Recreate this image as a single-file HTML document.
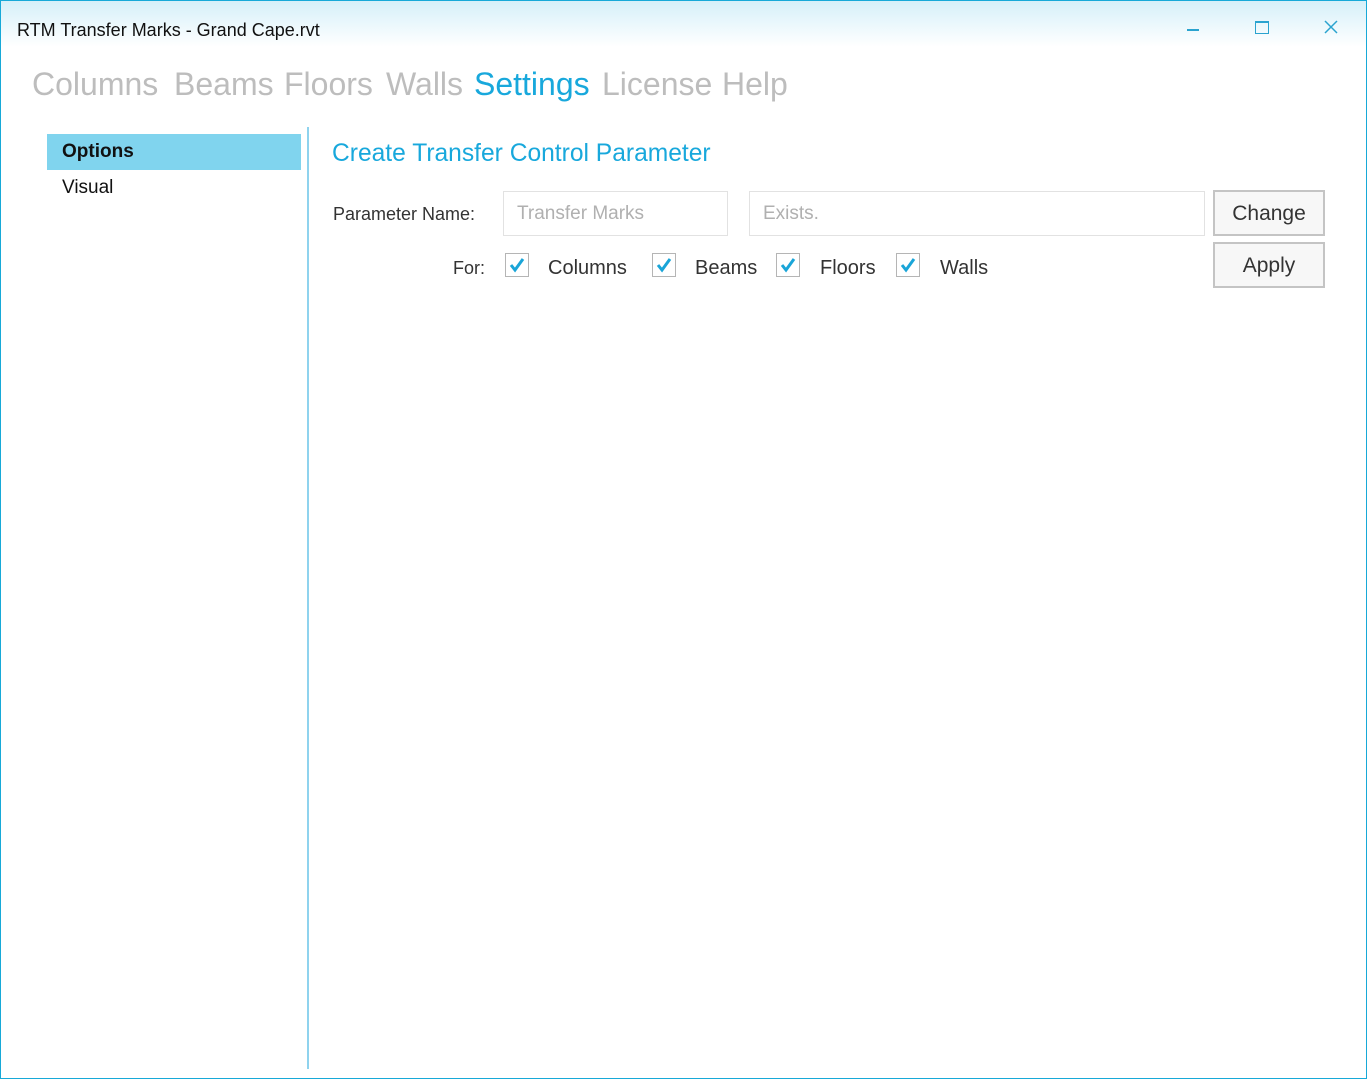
<!DOCTYPE html>
<html><head><style>
body{margin:0;width:1367px;height:1079px;position:relative;overflow:hidden;background:#fff;font-family:"Liberation Sans",sans-serif;}
.a{position:absolute;white-space:nowrap}
.nav{font-size:32px;color:#bdbdbd;top:66px}
.cb{position:absolute;width:24px;height:24px;border:1px solid #b5b5b5;box-sizing:border-box;top:253px;background:#fff}
.cb svg{position:absolute;left:3px;top:3px}
.lbl{font-size:20px;color:#333;top:257px}
.btn{position:absolute;left:1213px;width:112px;height:46px;border:2px solid #c4c4c4;box-sizing:border-box;background:#f7f7f7;font-size:21px;color:#333;text-align:center;line-height:44px}
.in{position:absolute;top:191px;height:45px;border:1px solid #e2e2e2;box-sizing:border-box;font-size:19px;color:#b0b0b0;line-height:44px;padding-left:13px}
</style></head><body>
<div class="a" style="left:0;top:0;width:1367px;height:1079px;border:1px solid #17a9d8;box-sizing:border-box"></div>
<div class="a" style="left:1px;top:1px;width:1365px;height:46px;background:linear-gradient(#d6f0f9,#fff)"></div>
<div class="a" style="left:17px;top:20px;font-size:18px;color:#111">RTM Transfer Marks - Grand Cape.rvt</div>
<div class="a" style="left:1187px;top:29px;width:12px;height:2px;background:#2aa3cf"></div>
<div class="a" style="left:1255px;top:21px;width:12px;height:10px;border:1px solid #2aa3cf;border-top-width:2px"></div>
<svg class="a" style="left:1324px;top:20px" width="14" height="14"><path d="M1 1L13 13M13 1L1 13" stroke="#2aa3cf" stroke-width="1.5"/></svg>
<div class="a nav" style="left:32px">Columns</div>
<div class="a nav" style="left:174px">Beams</div>
<div class="a nav" style="left:284px">Floors</div>
<div class="a nav" style="left:386px">Walls</div>
<div class="a nav" style="left:474px;color:#18a8dc">Settings</div>
<div class="a nav" style="left:602px">License</div>
<div class="a nav" style="left:722px">Help</div>
<div class="a" style="left:47px;top:134px;width:254px;height:36px;background:#80d4ee"></div>
<div class="a" style="left:62px;top:141px;font-size:19px;font-weight:bold;color:#111">Options</div>
<div class="a" style="left:62px;top:177px;font-size:19px;color:#111">Visual</div>
<div class="a" style="left:307px;top:127px;width:2px;height:942px;background:#8fd3ee"></div>
<div class="a" style="left:332px;top:140px;font-size:24.6px;color:#18a8dc">Create Transfer Control Parameter</div>
<div class="a" style="left:333px;top:204px;font-size:18px;color:#333">Parameter Name:</div>
<div class="in" style="left:503px;width:225px">Transfer Marks</div>
<div class="in" style="left:749px;width:456px">Exists.</div>
<div class="btn" style="top:190px">Change</div>
<div class="btn" style="top:242px">Apply</div>
<div class="a" style="left:453px;top:258px;font-size:18px;color:#333">For:</div>
<div class="cb" style="left:505px"><svg width="16" height="16"><path d="M2 8L6 13L14 2" fill="none" stroke="#1aa5d8" stroke-width="3"/></svg></div>
<div class="a lbl" style="left:548px">Columns</div>
<div class="cb" style="left:652px"><svg width="16" height="16"><path d="M2 8L6 13L14 2" fill="none" stroke="#1aa5d8" stroke-width="3"/></svg></div>
<div class="a lbl" style="left:695px">Beams</div>
<div class="cb" style="left:776px"><svg width="16" height="16"><path d="M2 8L6 13L14 2" fill="none" stroke="#1aa5d8" stroke-width="3"/></svg></div>
<div class="a lbl" style="left:820px">Floors</div>
<div class="cb" style="left:896px"><svg width="16" height="16"><path d="M2 8L6 13L14 2" fill="none" stroke="#1aa5d8" stroke-width="3"/></svg></div>
<div class="a lbl" style="left:940px">Walls</div>
</body></html>
